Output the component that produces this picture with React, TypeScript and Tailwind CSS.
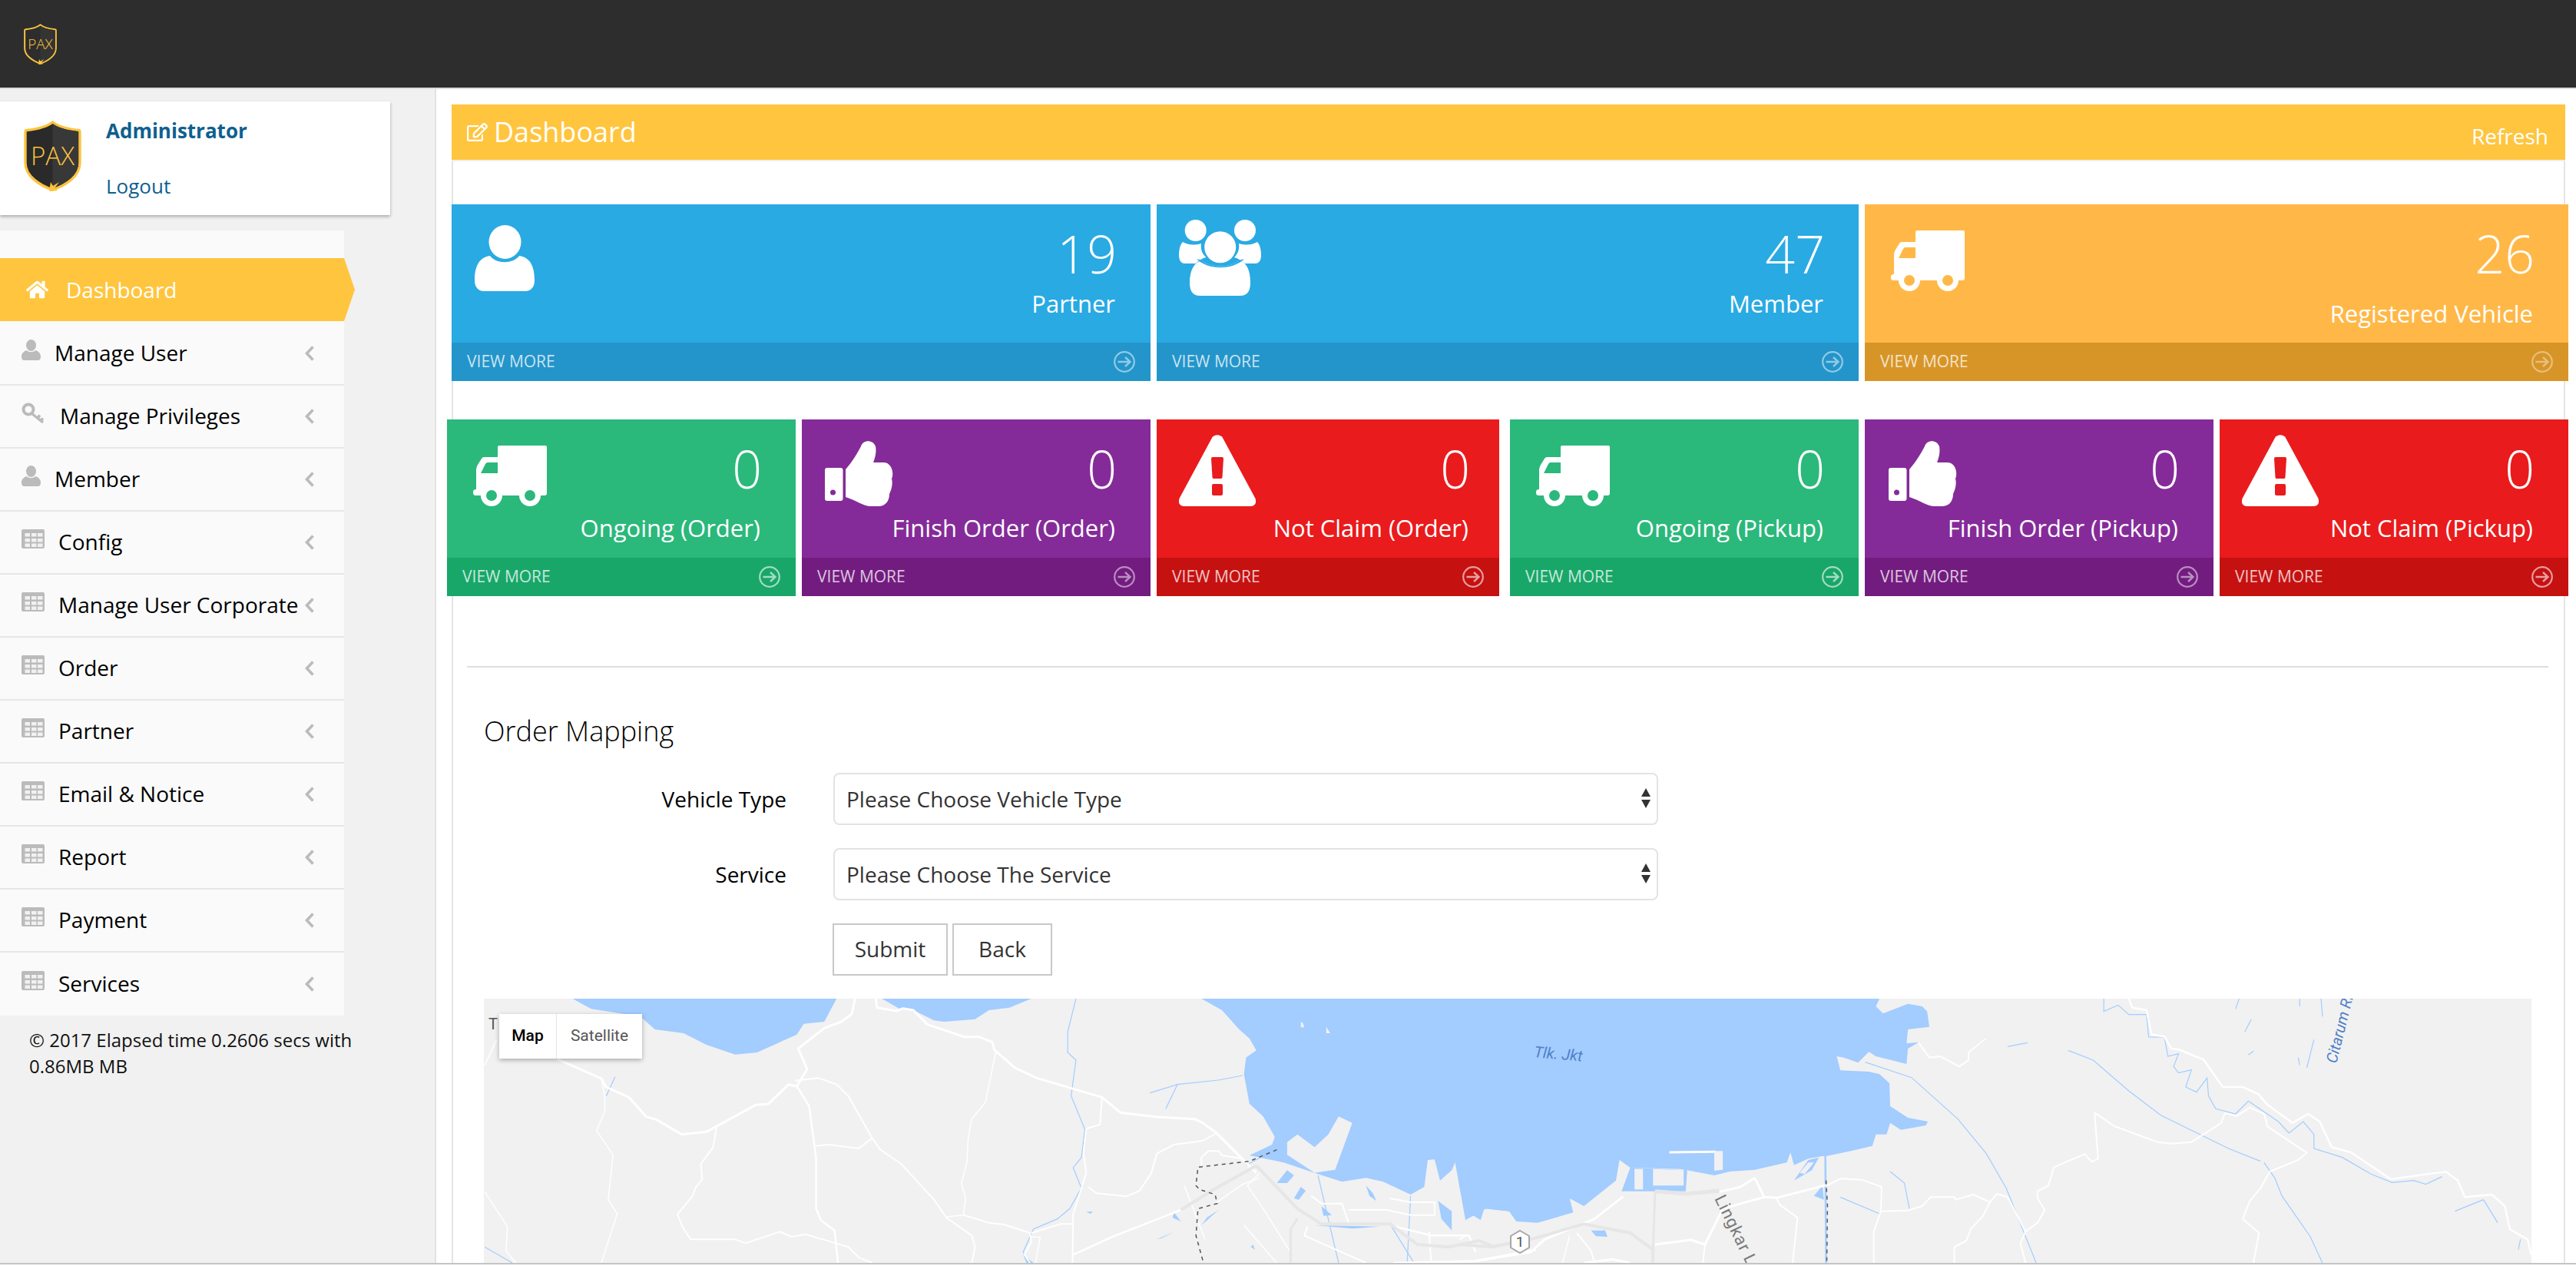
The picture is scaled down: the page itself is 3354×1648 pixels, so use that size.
import React from "react";
import { FaHome, FaRegEdit } from "react-icons/fa";

const Shield = ({ className, light }: { className: string; light?: boolean }) => (
  <svg viewBox="0 0 75 92" className={className}>
    <path d="M37.5 2C30 8 18 11 4 12.5Q2 12.5 2 15V55C2 72 20 84 37.5 90C55 84 73 72 73 55V15Q73 12.5 71 12.5C57 11 45 8 37.5 2Z" fill={light ? "#2a2a2a" : "#2d2d2d"} stroke="#fcc33f" strokeWidth="3.4" />
    <path d="M37.5 4C45 9.5 57 12.5 71 14V55C71 71 54 83 37.5 88Z" fill={light ? "#383838" : "#343434"} />
    <text x="37.5" y="58" textAnchor="middle" fontSize="33" fontFamily="'Open Sans',sans-serif" fontWeight="300" fill="#fcc33f">PAX</text>
    <path d="M33 92L35 80L38 85L46 80L40 88L44 91Z" fill="#fcc33f" />
  </svg>
);

const IconCls = "shrink-0 -mr-[60px]";

const Person = ({ c }: { c: string }) => (
  <svg viewBox="0 0 78 86" className={`${IconCls} ${c}`} fill="#fff">
    <path d="M0 72C0 55 5 42 20 40C28 51 50 51 58 40C73 42 78 55 78 72C78 82 72 86 66 86H12C6 86 0 82 0 72Z" />
    <ellipse cx="39.5" cy="22" rx="21" ry="22" />
  </svg>
);

const Group = ({ c, bg }: { c: string; bg: string }) => (
  <svg viewBox="0 0 108 99" className={`${IconCls} ${c}`} fill="#fff">
    <circle cx="21.7" cy="14" r="14" />
    <circle cx="86" cy="14" r="14" />
    <path d="M5 29C10 32 18 34 29 31C28 38 30 45 36 49C30 50 26 53 22 57H8C2 57 0 52 0 46C0 38 2 32 5 29Z" />
    <path d="M102 29C97 32 89 34 78 31C79 38 77 45 71 49C77 50 81 53 85 57H99C105 57 107 52 107 46C107 38 105 32 102 29Z" />
    <path d="M14 82C14 66 20 55 30 53C40 63 68 63 78 53C88 55 93 66 93 82C93 94 88 99 80 99H27C19 99 14 94 14 82Z" />
    <circle cx="53.7" cy="35.7" r="23" className={bg} />
    <circle cx="53.7" cy="35.7" r="20.5" />
    <path d="M30 53C40 63 68 63 78 53L85 51C70 66 38 66 23 51Z" className={bg} />
  </svg>
);

const Truck = ({ c, bg }: { c: string; bg: string }) => (
  <svg viewBox="0 0 96 79" className={`${IconCls} ${c}`} fill="#fff">
    <path d="M32 2A2 2 0 0 1 34 0H94A2 2 0 0 1 96 2V62A3 3 0 0 1 93 65H32Z" />
    <path fillRule="evenodd" d="M4 32C4 29 5 27 6 25L11 17C12 15.500 13 15 15 15H33V65H4ZM10 36L16 24Q17 22 19 22H32V36Z" />
    <rect x="0" y="57" width="10" height="8" rx="3.500" />
    <circle cx="24" cy="65" r="14" />
    <circle cx="74" cy="65" r="14" />
    <circle cx="24" cy="65" r="7" className={bg} />
    <circle cx="74" cy="65" r="7" className={bg} />
  </svg>
);

const Thumb = ({ c, bg }: { c: string; bg: string }) => (
  <svg viewBox="0 0 90 86" className={`${IconCls} ${c}`} fill="#fff">
    <rect x="0" y="36" width="23.500" height="43" rx="3" />
    <circle cx="10.500" cy="68" r="3.500" className={bg} />
    <path d="M27 38C36 28 44 14 47 8C49 0 62 -2 66 8C68 18 63 29 63 29H76C88 29 90 44 87 50C89 58 86 66 84 70C84 80 78 86 70 86H60C50 86 40 78 27 74Z" />
  </svg>
);

const Warn = ({ c, bg }: { c: string; bg: string }) => (
  <svg viewBox="0 0 100 93" className={`${IconCls} ${c}`} fill="#fff">
    <path d="M43 4C46 -1 54 -1 57 4L99 82C102 88 99 93 93 93H7C1 93 -2 88 1 82Z" />
    <path d="M42 31Q42 29 44 29H56Q58 29 58 31L56.500 55Q56.500 57 55 57H45Q43.500 57 43.500 55Z" className={bg} />
    <rect x="43" y="64" width="14" height="15" rx="2" className={bg} />
  </svg>
);

const ArrowCircle = ({ c }: { c: string }) => (
  <svg viewBox="0 0 28 28" className={`w-[28px] h-[28px] ${c}`} fill="none" stroke="currentColor">
    <circle cx="14" cy="14" r="12.800" strokeWidth="2.200" />
    <path d="M5.500 14H21M15 8L21.500 14L15 20" strokeWidth="2.400" />
  </svg>
);

type CardT = {
  n: string;
  label: string;
  icon: React.ReactNode;
  bg: string;
  foot: string;
  arrow: string;
  labelCls: string;
  wrap?: string;
  pad?: string;
};

const blueFill = "fill-[#29aae3]";
const greenFill = "fill-[#2bb87b]";
const purpleFill = "fill-[#852b99]";
const redFill = "fill-[#e91b1d]";
const orangeFill = "fill-[#ffb848]";

const Card = ({ card }: { card: CardT }) => (
  <div className={`flex flex-col h-[230px] ${card.wrap ?? ""}`}>
    <div className={`flex justify-between h-[180px] ${card.bg}`}>
      {card.icon}
      <div className={`flex flex-col items-end pt-[26px] text-white whitespace-nowrap ${card.pad ?? "pr-[46px]"}`}>
        <div className="text-[68px] leading-[76px] font-light -mr-[2px]">{card.n}</div>
        <div className={`text-[31px] leading-[44px] font-normal ${card.labelCls}`}>{card.label}</div>
      </div>
    </div>
    <div className={`flex items-center justify-between h-[50px] pl-[20px] pr-[20px] ${card.foot}`}>
      <span className="text-[21px] font-normal text-white/75">VIEW MORE</span>
      <ArrowCircle c={card.arrow} />
    </div>
  </div>
);

const rowOne: CardT[] = [
  { n: "19", label: "Partner", icon: <Person c="w-[78px] h-[86px] ml-[30px] mt-[27px]" />, bg: "bg-[#29aae3]", foot: "bg-[#2395cb]", arrow: "text-white/50", labelCls: "mt-[5px]" },
  { n: "47", label: "Member", icon: <Group bg={blueFill} c="w-[108px] h-[99px] ml-[29px] mt-[20px]" />, bg: "bg-[#29aae3]", foot: "bg-[#2395cb]", arrow: "text-white/50", labelCls: "mt-[5px]" },
  { n: "26", label: "Registered Vehicle", icon: <Truck bg={orangeFill} c="w-[98px] h-[79px] ml-[33px] mt-[34px]" />, bg: "bg-[#ffb848]", foot: "bg-[#d89527]", arrow: "text-white/40", labelCls: "mt-[18px]" },
];

const green = { bg: "bg-[#2bb87b]", foot: "bg-[#18a769]", arrow: "text-white/60", labelCls: "mt-[17px]" };
const purple = { bg: "bg-[#852b99]", foot: "bg-[#731c80]", arrow: "text-white/50", labelCls: "mt-[17px]" };
const red = { bg: "bg-[#e91b1d]", foot: "bg-[#c61111]", arrow: "text-white/60", labelCls: "mt-[17px]" };

const rowTwo: CardT[] = [
  { n: "0", label: "Ongoing (Order)", icon: <Truck bg={greenFill} c="w-[96px] h-[79px] ml-[34px] mt-[34px]" />, ...green },
  { n: "0", label: "Finish Order (Order)", icon: <Thumb bg={purpleFill} c="w-[90px] h-[86px] ml-[30px] mt-[27px]" />, ...purple },
  { n: "0", label: "Not Claim (Order)", icon: <Warn bg={redFill} c="w-[100px] h-[93px] ml-[29px] mt-[20px]" />, ...red, wrap: "mr-[6px]", pad: "pr-[40px]" },
  { n: "0", label: "Ongoing (Pickup)", icon: <Truck bg={greenFill} c="w-[96px] h-[79px] ml-[34px] mt-[34px]" />, ...green },
  { n: "0", label: "Finish Order (Pickup)", icon: <Thumb bg={purpleFill} c="w-[90px] h-[86px] ml-[31px] mt-[27px]" />, ...purple },
  { n: "0", label: "Not Claim (Pickup)", icon: <Warn bg={redFill} c="w-[100px] h-[93px] ml-[29px] mt-[20px]" />, ...red },
];

const UserIco = () => (
  <svg viewBox="0 0 25 27" className="w-[25px] h-[27px]" fill="#bbb">
    <ellipse cx="12.500" cy="7.500" rx="6.500" ry="7.500" />
    <path d="M0 22C0 18 3 15 7 14C9 17 16 17 18 14C22 15 25 18 25 22C25 25 24 27 21 27H4C1 27 0 25 0 22Z" />
  </svg>
);
const KeyIco = () => (
  <svg viewBox="0 0 30 28" className="w-[30px] h-[28px]" fill="none" stroke="#bbb">
    <circle cx="9" cy="9" r="6.500" strokeWidth="4" />
    <path d="M13 14L28 26M21 20L24 16.500M25 23.500L28 20.500" strokeWidth="3.500" />
  </svg>
);
const TableIco = () => (
  <svg viewBox="0 0 30 25" className="w-[30px] h-[25px]">
    <rect width="30" height="25" rx="2" fill="#bbb" />
    {[4.500, 13, 21].map((x) =>
      [5, 12, 18.500].map((y) => <rect key={`${x}-${y}`} x={x} y={y} width="6.500" height="4.500" fill="#f1f1f1" />)
    )}
  </svg>
);

const items: { t: string; i: React.ReactNode; cls: string }[] = [
  { t: "Manage User", i: <UserIco />, cls: "ml-[13px]" },
  { t: "Manage Privileges", i: <KeyIco />, cls: "ml-[20px]" },
  { t: "Member", i: <UserIco />, cls: "ml-[13px]" },
  { t: "Config", i: <TableIco />, cls: "ml-[18px]" },
  { t: "Manage User Corporate", i: <TableIco />, cls: "ml-[18px]" },
  { t: "Order", i: <TableIco />, cls: "ml-[18px]" },
  { t: "Partner", i: <TableIco />, cls: "ml-[18px]" },
  { t: "Email & Notice", i: <TableIco />, cls: "ml-[18px]" },
  { t: "Report", i: <TableIco />, cls: "ml-[18px]" },
  { t: "Payment", i: <TableIco />, cls: "ml-[18px]" },
  { t: "Services", i: <TableIco />, cls: "ml-[18px]" },
];

const Sidebar = () => (
  <aside className="w-[568px] shrink-0 bg-[#f1f1f1] border-r-2 border-[#e2e2e2] pt-[16px]">
    <div className="w-[508px] h-[148px] bg-white shadow-[0_2px_4px_rgba(0,0,0,0.3)] flex">
      <Shield light className="w-[75px] h-[92px] ml-[31px] mt-[25px]" />
      <div className="ml-[32px] pt-[17px]">
        <div className="text-[26px] leading-[42px] font-bold text-[#0f5f8f]">Administrator</div>
        <div className="text-[26px] leading-[42px] mt-[30px] text-[#0f5f8f]">Logout</div>
      </div>
    </div>
    <nav className="w-[448px] mt-[20px] bg-[#fafafa] pt-[36px]">
      <div className="w-[462px] h-[82px] mb-[2px] bg-[#ffc53f] flex items-center pl-[34px] text-white text-[28px] [clip-path:polygon(0_0,448px_0,100%_50%,448px_100%,0_100%)]">
        <FaHome className="w-[29px] h-[26px] text-white" />
        <span className="ml-[23px]">Dashboard</span>
      </div>
      {items.map((m) => (
        <div key={m.t} className="h-[82px] pb-[3px] border-b-2 last:border-b-0 border-[#e6e6e6] flex items-center pl-[28px] pr-[39px] text-[28px] text-black">
          <span className="w-[30px] flex items-center -mt-[6px]">{m.i}</span>
          <span className={`${m.cls} flex-1 whitespace-nowrap`}>{m.t}</span>
          <svg viewBox="0 0 12 20" className="w-[12px] h-[20px] mt-[2px]" fill="none" stroke="#bbb" strokeWidth="3.600"><path d="M10.500 1.500L2.500 10L10.500 18.500" /></svg>
        </div>
      ))}
    </nav>
    <div className="w-[482px] pl-[38px] mt-[15px] text-[24px] leading-[34px] text-[#111]">
      © 2017 Elapsed time 0.2606 secs with 0.86MB MB
    </div>
  </aside>
);

const Select = ({ label, text }: { label: string; text: string }) => (
  <div className="flex items-center h-[68px]">
    <label className="w-[394px] text-right text-[28px] text-black">{label}</label>
    <div className="relative ml-[61px] w-[1074px] h-[68px]">
      <select className="w-full h-full appearance-none bg-white border-2 border-[#e3e3e3] rounded-[8px] pl-[15px] text-[28px] text-[#333]">
        <option>{text}</option>
      </select>
      <svg viewBox="0 0 14 26" className="absolute right-[9px] top-[20px] w-[14px] h-[26px]" fill="#333"><path d="M7 0L13 11H1ZM7 26L13 15H1Z" /></svg>
    </div>
  </div>
);

type Pts = string;
const W = ({ p, w = 2.500 }: { p: Pts; w?: number }) => <polyline points={p} fill="none" stroke="#fff" strokeWidth={w} strokeLinejoin="round" vectorEffect="non-scaling-stroke" />;
const B = ({ p, w = 1.200 }: { p: Pts; w?: number }) => <polyline points={p} fill="none" stroke="#a3ccff" strokeWidth={w} vectorEffect="non-scaling-stroke" />;
const G = ({ p, w = 4 }: { p: Pts; w?: number }) => <polyline points={p} fill="none" stroke="#e6e6e6" strokeWidth={w} vectorEffect="non-scaling-stroke" />;
const D = ({ p }: { p: Pts }) => <polyline points={p} fill="none" stroke="#555" strokeWidth={1.500} strokeDasharray="5 5" vectorEffect="non-scaling-stroke" />;

const leftWhite: [string, number][] = [
  ["140,295 205,372 212,405 245,445 270,520 285,532 322,590 358,580 430,475 448,472 478,395 490,402 505,335 492,255 530,175 555,150 570,120 575,60", 3],
  ["605,60 607,95 635,108 645,98 660,105 680,160 735,210 755,208 775,230 778,260 808,330 840,370 935,445 962,505 1015,522 1070,530 1082,545 1102,585 1160,740", 3],
  ["490,402 508,480 518,680 518,880 525,925 545,965 550,1092", 2.500],
  ["487,380 522,370 548,395 565,440 600,605 612,650 642,705 690,845 708,915 745,985 750,1030 745,1092", 2],
  ["600,605 580,645 537,630 517,635", 2],
  ["373,560 368,640 350,705 352,765 342,800 338,830 316,902 323,950 335,1000 400,1000 415,1015 465,970 482,990 502,980 540,1010 565,1030 580,1070 600,1092", 2],
  ["205,372 210,440 210,500 198,575 222,670 215,845 228,900 205,1092", 1.500],
  ["780,270 765,465 745,530 740,600 738,700 730,780 736,840 733,905 708,912", 1.500],
  ["733,905 770,935 792,942 830,975 832,1010 822,1060 830,1092", 2],
  ["935,445 932,552 912,568 908,660 912,740 905,800 893,900 892,1092", 2],
  ["915,795 927,820 970,832 990,810 1007,740 1015,665 1040,630 1082,615 1102,585", 2],
  ["832,975 875,940 893,940", 2],
  ["893,1060 950,990 1050,885 1095,810 1160,712", 2.500],
  ["52,220 35,320", 1.500],
  ["35,815 68,950 66,1045 80,1092", 1.500],
  ["832,990 845,992 838,1092", 1.500],
  ["1080,710 1080,680 1090,655 1105,655 1110,672 1140,685", 2],
  ["1055,790 1068,880 1085,1000", 1.500],
  ["1142,945 1190,1092", 1.500],
  ["1165,740 1147,790 1170,880 1210,1050", 1.500],
  ["1235,950 1230,985 1320,1092", 2],
  ["1240,830 1255,860 1285,860 1295,940", 2],
  ["1295,885 1350,885 1385,905 1420,905", 2],
  ["1355,840 1385,855 1420,855 1420,905", 2],
  ["1355,945 1415,985 1470,985 1480,1050", 2.500],
  ["1412,970 1415,1092", 2],
  ["1568,1040 1480,1085 1360,1092", 3],
  ["1100,860 1140,785 1165,760", 1.500],
];

const leftBlue: string[] = [
  "897,60 885,190 885,270 897,300 890,440 910,570 905,680 893,720 905,800 888,880 870,920 835,960 820,1050 830,1092",
  "225,365 212,440",
  "1140,360 1105,378 1045,395 1005,428",
  "1045,395 1028,490",
  "1385,830 1380,1092",
  "1250,750 1280,1092",
  "1145,710 1195,640",
  "1355,940 1390,1092",
  "35,1030 75,1092",
];

const rightWhite: [string, number][] = [
  ["645,232 660,290 675,285 702,325 715,300 715,270 740,212", 2],
  ["940,60 945,95 965,105 972,200 990,208 1000,255 1010,258 1045,298 1072,405 1100,405 1122,433 1135,475 1170,545 1192,510 1208,540 1225,640 1252,660 1308,765 1385,735 1402,770 1412,835 1450,825 1468,870 1475,960 1500,1000 1505,1060", 2.500],
  ["892,505 920,558 980,620 1000,626 1028,620 1070,545 1075,507 1092,518 1110,485 1130,510 1135,560 1190,662 1178,690 1138,735 1125,800 1110,850 1100,920 1123,975 1115,1092", 2],
  ["892,505 897,685 888,697 878,667 835,718 827,790 812,812 812,840 822,885 812,935 795,970 788,1015 795,1092", 2],
  ["520,785 535,763 565,767 593,795 592,890 582,970 582,1092", 2],
  ["592,890 630,887 650,870 662,835 695,835 697,845 722,825 745,855 755,822 770,835 795,970", 2],
  ["745,855 735,910 718,960 712,1005 695,1030 695,1092", 2],
  ["415,760 395,795 365,815", 3],
  ["415,760 428,835 445,838 520,785", 3],
  ["445,838 450,865 475,915 468,1092", 2],
  ["230,833 190,920 120,1000 100,1050 20,1085", 3],
  ["165,975 185,1045 190,1092", 2],
  ["155,985 145,1092", 1.500],
  ["428,835 370,880 345,1020 325,1002 275,1020", 3],
  ["345,1020 342,1092", 2],
  ["240,1092 215,1078 175,1092", 3],
  ["10,985 0,1000", 2],
];

const rightBlue: string[] = [
  "570,308 635,368 700,530 740,665 768,800 810,1092",
  "855,262 890,300 940,420 985,515 1080,645 1125,695",
  "1130,700 1145,760 1155,830 1195,990 1212,1092",
  "905,60 905,110 925,85 940,122 965,122 968,210 990,210 995,285 1010,275 1003,325 1010,350 1028,338 1020,405 1035,425 1050,370 1052,440 1062,490 1090,510 1108,460 1150,540 1165,585 1185,540 1200,590 1200,645 1240,680 1280,745 1310,778 1340,770 1357,785 1380,755",
  "1310,765 1385,733",
  "1438,845 1398,890",
  "1438,845 1458,935",
  "770,247 798,232",
  "740,210 715,270",
  "1115,265 1108,280",
  "1112,140 1103,190",
  "1095,60 1090,100",
  "1180,60 1180,90",
  "1210,60 1212,130",
  "1200,220 1190,330",
  "1178,290 1180,320",
  "605,735 625,780 632,880",
  "535,835 590,900",
  "1490,1000 1487,1040",
];

const MapArt = () => (
  <svg viewBox="630 1300 2666 344" className="block w-[2666px] h-[344px]">
    <rect x="630" y="1300" width="2666" height="344" fill="#f1f1f1" />
    <g transform="translate(600 1280) scale(0.89286 0.33333)">
      <polygon fill="#a3ccff" points="163,60 190,100 262,130 283,180 325,195 358,240 400,278 432,270 490,200 500,158 530,150 540,100 548,60" />
      <polygon fill="#a3ccff" points="614,60 640,100 660,105 690,145 705,150 750,140 770,105 800,95 832,60" />
      <polygon fill="#a3ccff" points="1080,60 1110,105 1135,180 1150,215 1160,262 1145,290 1142,355 1150,470 1170,520 1187,600 1183,630 1150,672 1200,700 1250,745 1285,775 1320,760 1345,775 1385,825 1405,795 1410,690 1420,688 1428,770 1445,730 1450,700 1465,925 1495,880 1530,890 1568,935 1568,60" />
      <polygon fill="#f1f1f1" points="1205,620 1220,590 1245,640 1265,590 1280,520 1300,545 1275,728 1245,740 1205,670" />
      <polygon fill="#f1f1f1" points="1225,150 1225,172 1230,172 1228,155" />
      <polygon fill="#f1f1f1" points="1262,170 1268,195 1262,195" />
      <polygon fill="#a3ccff" points="1040,895 1050,930 1038,915" />
      <polygon fill="#a3ccff" points="1190,780 1205,730 1215,750 1205,780" />
      <polygon fill="#a3ccff" points="1215,840 1225,795 1232,810 1222,845" />
      <polygon fill="#a3ccff" points="1320,790 1330,820 1335,850 1325,830" />
      <polygon fill="#a3ccff" points="1425,850 1445,890 1445,965 1430,920" />
      <polygon fill="#a3ccff" points="1255,870 1270,905 1258,908" />
      <polygon fill="#a3ccff" points="1245,945 1340,950 1300,958" />
      <polygon fill="#a3ccff" points="1105,885 1080,945 1088,915" />
      <polygon fill="#a3ccff" points="1015,1000 1042,968 1022,995" />
      <polygon fill="#a3ccff" points="912,892 922,892 918,900" />
      <polygon fill="#a3ccff" points="820,1060 835,1092 825,1092" />
      <polygon fill="#a3ccff" points="1155,1020 1158,1040 1152,1030" />
      {leftBlue.map((p, i) => <B key={i} p={p} />)}
      {leftWhite.map(([p, w], i) => <W key={i} p={p} w={w} />)}
      <G p="1160,712 1220,880 1255,940 1355,940 1395,1020 1440,1030 1485,1005 1505,1028 1530,1015" />
      <G p="1160,712 1095,810 1050,885" />
      <G p="1220,920 1210,960 1210,1092" w={3} />
      <D p="1190,650 1150,695 1075,718 1072,790 1077,805 1100,825 1103,860 1075,880 1072,985 1083,1092" />
    </g>
    <g transform="translate(1900 1280) scale(0.92731 0.33333)">
      <polygon fill="#a3ccff" points="0,60 590,60 585,90 595,118 630,80 650,90 657,110 660,170 630,180 628,235 645,230 630,255 628,315 585,285 575,268 560,310 540,290 530,285 535,340 575,345 535,352 575,345 590,355 604,390 605,480 630,525 658,540 655,555 620,572 605,545 600,590 585,590 580,635 550,655 515,675 510,675 490,685 470,710 465,660 460,700 415,728 380,735 358,750 320,730 310,725 240,720 225,690 220,770 175,870 155,840 160,895 110,935 80,930 70,890 35,880 30,925 10,890 0,790" />
      <polygon fill="#a3ccff" points="240,720 320,730 318,812 228,812" />
      <polygon fill="#f1f1f1" points="246,725 258,725 258,805 246,805" />
      <polygon fill="#f1f1f1" points="272,725 315,730 315,790 272,790" />
      <polygon fill="#a3ccff" points="185,965 205,965 208,990 192,988" />
      <polygon fill="#a3ccff" points="470,770 490,690 505,680 495,730" />
      <polygon fill="#f1f1f1" points="478,740 490,700 498,700 485,745" />
      <polygon fill="#a3ccff" points="498,830 510,790 512,845" />
      <polyline points="295,660 360,658" fill="none" stroke="#fff" strokeWidth="3" vectorEffect="non-scaling-stroke" />
      <polygon fill="#f1f1f1" points="358,655 370,655 370,728 358,732" />
      <B p="514,675 515,1092" w={2.500} />
      {rightBlue.map((p, i) => <B key={i} p={p} />)}
      {rightWhite.map(([p, w], i) => <W key={i} p={p} w={w} />)}
      <G p="0,1020 45,1030 100,1000 175,940 240,975 272,1040 272,1092" />
      <G p="275,812 320,822 365,810" w={5} />
      <G p="275,812 272,1040" w={3} />
      <D p="515,770 517,870 516,1092" />
    </g>
    <text x="1997" y="1376" fontSize="20" fontStyle="italic" fontFamily="Roboto,sans-serif" fill="#4f80c8" transform="rotate(5 1997 1376)">Tlk. Jkt</text>
    <text x="3042" y="1385" fontSize="20" fontStyle="italic" fontFamily="Roboto,sans-serif" fill="#4f80c8" transform="rotate(-76 3042 1385)">Citarum Ri</text>
    <text x="2232" y="1560" fontSize="22" fontFamily="Roboto,sans-serif" letterSpacing="1" fill="#7a7a7a" transform="rotate(64 2232 1560)">Lingkar Lua</text>
    <polygon points="1979,1602 1991,1609 1991,1624 1979,1631 1967,1624 1967,1609" fill="#fff" stroke="#a8a8a8" strokeWidth="2" />
    <text x="1979" y="1623" textAnchor="middle" fontSize="19" fontFamily="Roboto,sans-serif" fill="#555">1</text>
  </svg>
);

export default function App() {
  return (
    <div className="w-[3354px] h-[1648px] overflow-hidden bg-white flex flex-col font-['Open_Sans',sans-serif]">
      <header className="h-[114px] shrink-0 bg-[#2d2d2d] flex items-start">
        <Shield className="w-[43px] h-[53px] ml-[31px] mt-[31px]" />
      </header>
      <div className="h-[2px] shrink-0 bg-[#dcdcdc]" />
      <div className="h-[1528px] shrink-0 flex overflow-hidden">
        <Sidebar />
        <main className="flex-1 pl-[20px] pr-[14px] pt-[20px]">
          <section className="h-[1600px] border-x-2 border-[#e4e4e4]">
            <div className="-mx-[2px] h-[74px] bg-[#ffc53f] border-b-2 border-[#eeeeee] flex justify-between text-white pl-[20px] pr-[22px]">
              <div className="flex items-center h-[72px]">
                <FaRegEdit className="w-[27px] h-[24px]" />
                <span className="text-[36px] ml-[8px]">Dashboard</span>
              </div>
              <span className="text-[28px] pt-[20px]">Refresh</span>
            </div>
            <div className="grid grid-cols-[910px_914px_916px] gap-x-[8px] -ml-[2px] -mr-[6px] mt-[56px]">
              {rowOne.map((c) => <Card key={c.n} card={c} />)}
            </div>
            <div className="grid grid-cols-[454px_454px_452px_454px_454px_454px] -ml-[8px] -mr-[6px] mt-[50px] gap-x-[8px]">
              {rowTwo.map((c) => <Card key={c.label} card={c} />)}
            </div>
            <hr className="ml-[18px] mr-[20px] mt-[91px] border-t-2 border-[#dedede]" />
            <div className="pl-[40px]">
              <h2 className="mt-[58px] text-[36px] leading-[50px] font-light text-black">Order Mapping</h2>
              <div className="mt-[29px] flex flex-col gap-[30px]">
                <Select label="Vehicle Type" text="Please Choose Vehicle Type" />
                <Select label="Service" text="Please Choose The Service" />
              </div>
              <div className="ml-[454px] mt-[30px] flex gap-[6px] text-[28px] text-[#333]">
                <button className="w-[150px] h-[68px] pb-[3px] bg-white border-2 border-[#c8c8c8]">Submit</button>
                <button className="w-[130px] h-[68px] pb-[3px] bg-white border-2 border-[#c8c8c8]">Back</button>
              </div>
              <div className="relative mt-[30px] w-[2666px] h-[344px] overflow-hidden">
                <MapArt />
                <span className="absolute left-[6px] top-[21px] text-[20px] leading-[24px] text-[#555] font-['Roboto',sans-serif]">T</span>
                <div className="absolute left-[20px] top-[20px] h-[58px] flex bg-white shadow-[0_2px_6px_rgba(0,0,0,0.3)] text-[21px] font-['Roboto',sans-serif] items-center">
                  <span className="w-[75px] h-full flex items-center justify-center font-medium text-black border-r border-[#e6e6e6]">Map</span>
                  <span className="w-[111px] h-full flex items-center justify-center text-[#565656]">Satellite</span>
                </div>
              </div>
            </div>
          </section>
        </main>
      </div>
      <div className="h-[2px] shrink-0 bg-[#c4c4c4]" />
      <div className="h-[2px] shrink-0 bg-white" />
    </div>
  );
}
